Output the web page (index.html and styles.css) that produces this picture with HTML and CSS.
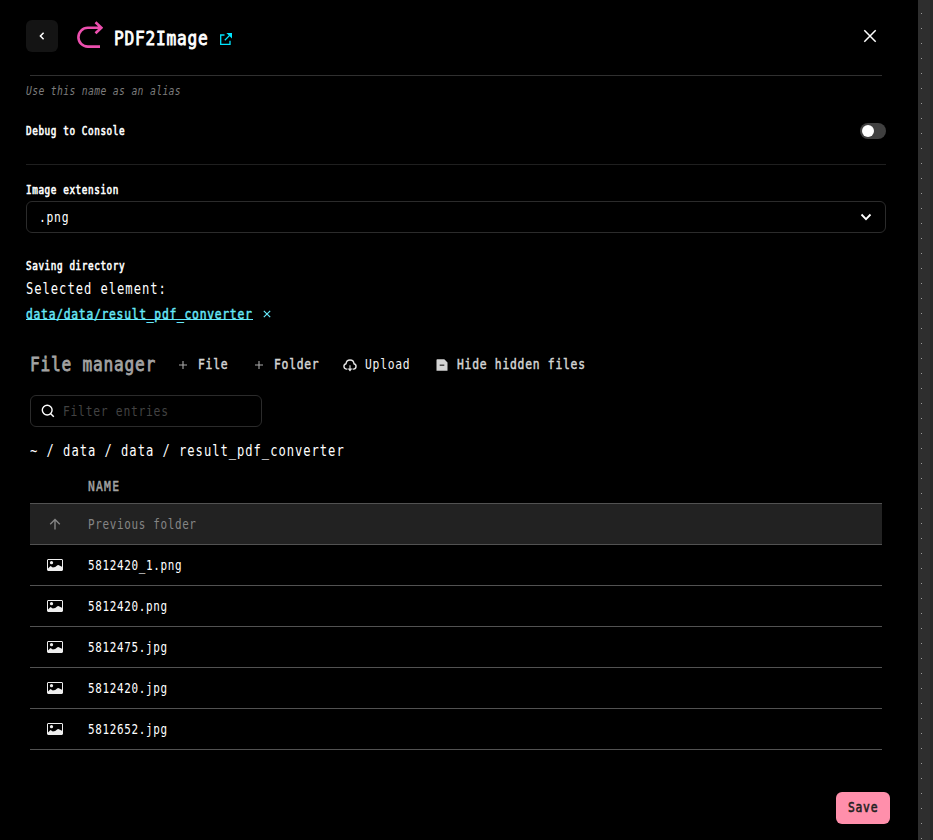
FILE: index.html
```html
<!DOCTYPE html>
<html lang="en">
<head>
<meta charset="utf-8">
<title>PDF2Image</title>
<link rel="stylesheet" href="styles.css">
</head>
<body>
<div class="app">
<main class="panel">
  <header class="header">
    <button class="back" aria-label="Back"><svg width="6" height="8" viewBox="0 0 6 8"><path d="M4.6.7 1.4 4l3.2 3.3" fill="none" stroke="#fff" stroke-width="1.5"/></svg></button>
    <svg class="logo" width="26" height="27" viewBox="0 0 26 27"><path d="M23.5 6.8H10.8a9.4 9.4 0 0 0 0 18.8H23M18.5 1.3l5.8 5.5-5.8 5.5" fill="none" stroke="#ec4fae" stroke-width="2.6"/></svg>
    <h1 class="title"><span class="t">PDF2Image</span></h1>
    <svg class="external" width="14" height="14" viewBox="0 0 14 14"><path d="M5.5 3H1.7v9.3H11V8.7M5.8 8.2l5.8-5.8" fill="none" stroke="#00e5ff" stroke-width="1.3"/><path d="M7.4 1H13v5.6z" fill="#00e5ff"/></svg>
    <svg class="close" width="14" height="14" viewBox="0 0 14 14"><path d="m1.3 1.3 11.4 11.4m0-11.4L1.3 12.7" stroke="#fff" stroke-width="1.5"/></svg>
  </header>
  <p class="hint"><span class="t">Use this name as an alias</span></p>
  <div class="setting"><span class="label"><span class="t">Debug to Console</span></span><span class="toggle"></span></div>
  <label class="label ext-label"><span class="t">Image extension</span></label>
  <div class="select"><span class="body"><span class="t">.png</span></span><svg width="12" height="8" viewBox="0 0 12 8"><path d="m1.5 1.5 4.5 4.6 4.5-4.6" fill="none" stroke="#fff" stroke-width="1.8"/></svg></div>
  <label class="label dir-label"><span class="t">Saving directory</span></label>
  <div class="large selected"><span class="t">Selected element:</span></div>
  <div class="path"><a class="body bold"><span class="t">data/data/result_pdf_converter</span></a><svg width="8" height="8" viewBox="0 0 8 8"><path d="m.8.8 6.4 6.4m0-6.4L.8 7.2" stroke="#67e8f9" stroke-width="1.2"/></svg></div>

  <section class="manager">
    <div class="toolbar">
      <h2><span class="t">File manager</span></h2>
      <button class="tool file"><svg width="8" height="8" viewBox="0 0 8 8"><path d="M4 0v8M0 4h8" stroke="#a9a9a9" stroke-width="1.1"/></svg><span class="t">File</span></button>
      <button class="tool folder"><svg width="8" height="8" viewBox="0 0 8 8"><path d="M4 0v8M0 4h8" stroke="#a9a9a9" stroke-width="1.1"/></svg><span class="t">Folder</span></button>
      <button class="tool upload"><svg width="14" height="13" viewBox="0 0 14 13"><path d="M4.4 10.1H3.3a2.7 2.7 0 0 1-.3-5.3C3.3 2.5 4.8 1 7 1s3.8 1.5 4 3.8a2.7 2.7 0 0 1-.4 5.3h-1" fill="none" stroke="#e5e5e5" stroke-width="1.4"/><path d="M7 6.2v4" stroke="#aaa" stroke-width="1.5"/><path d="M4.6 9.5h4.8L7 12.5z" fill="#e5e5e5"/></svg><span class="t">Upload</span></button>
      <button class="tool hide"><svg width="12" height="12" viewBox="0 0 12 12"><path d="M1.2.2h7.1l3.2 3.2v8.4H.5V1q0-.8.7-.8z" fill="#d4d4d4"/><path d="M3.7 6.2h4.6" stroke="#333" stroke-width="1.3"/></svg><span class="t">Hide hidden files</span></button>
    </div>
    <div class="search"><svg width="14" height="14" viewBox="0 0 14 14"><circle cx="6.2" cy="6.1" r="4.9" fill="none" stroke="#fff" stroke-width="1.4"/><path d="m9.7 9.7 3.1 3" stroke="#fff" stroke-width="1.5"/></svg><span class="body"><span class="t">Filter entries</span></span></div>
    <div class="large crumbs"><span class="t">~ / data / data / result_pdf_converter</span></div>
    <div class="thead"><span class="t">NAME</span></div>
    <div class="row previous"><span class="icon"><svg width="12" height="12" viewBox="0 0 12 12"><path d="M6 11.5V1.5M1.2 6.2 6 1.4l4.8 4.8" fill="none" stroke="#858585" stroke-width="1.4"/></svg></span><span class="t">Previous folder</span></div>
    <div class="row"><span class="icon"><svg width="16" height="12"><use href="#image"/></svg></span><span class="t">5812420_1.png</span></div>
    <div class="row"><span class="icon"><svg width="16" height="12"><use href="#image"/></svg></span><span class="t">5812420.png</span></div>
    <div class="row"><span class="icon"><svg width="16" height="12"><use href="#image"/></svg></span><span class="t">5812475.jpg</span></div>
    <div class="row"><span class="icon"><svg width="16" height="12"><use href="#image"/></svg></span><span class="t">5812420.jpg</span></div>
    <div class="row"><span class="icon"><svg width="16" height="12"><use href="#image"/></svg></span><span class="t">5812652.jpg</span></div>
  </section>
  <footer><button class="save"><span class="t">Save</span></button></footer>
</main>
<aside class="canvas"></aside>
</div>
<svg class="defs" width="0" height="0"><symbol id="image" viewBox="0 0 16 12"><rect x=".5" y=".5" width="15" height="11" rx=".5" fill="none" stroke="#eee"/><circle cx="4.5" cy="3.7" r="1.6" fill="#eee"/><path d="M1 9.4 3.5 7l2.3 1.6L8.2 8l2.2-1.7q1-.6 2 .1L15 7.7V12H1z" fill="#eee"/></symbol></svg>
</body>
</html>
```
FILE: styles.css
```css
* { box-sizing: border-box; }
body { margin: 0; background: #000; color: #fff; font-family: "DejaVu Sans Mono", "Liberation Mono", monospace; overflow: hidden; }
h1, h2, p { margin: 0; font-weight: 400; }
button { border: 0; padding: 0; background: none; color: inherit; font: inherit; }
svg { display: block; flex: none; }
.app { display: flex; height: 840px; }
.panel { width: 918px; height: 840px; padding: 0 32px 0 26px; }
.canvas { width: 15px; background: radial-gradient(circle, #999 0 .7px, transparent .8px) -4px 6px / 15px 15px, linear-gradient(90deg, #2e2e2e 12px, #292929 12px); }

/* Narrow glyphs set on a fixed character pitch */
.t { display: inline-block; width: 0; white-space: pre; line-height: 20px; transform: scaleX(.81); transform-origin: left; letter-spacing: calc(var(--pitch) / .81 - .602em); }

.header { display: flex; align-items: flex-start; height: 76px; position: relative; }
.header::after { content: ""; position: absolute; left: 4px; right: 4px; bottom: 0; height: 1px; background: #303030; }
.back { width: 32px; height: 32px; margin-top: 20px; border-radius: 6px; background: #141414; display: flex; align-items: center; justify-content: center; }
.logo { margin: 21px 0 0 19px; }
.title { --pitch: 10.5px; width: 95px; margin: 28px 0 0 11px; font-size: 20px; -webkit-text-stroke: .9px; line-height: 20px; }
.external { margin: 32px 0 0 10px; }
.close { margin: 29px 9px 0 auto; }
.hint { --pitch: 6.2px; height: 30px; font-size: 12px; line-height: 30px; font-style: italic; color: #7c7c7c; }
.setting { display: flex; align-items: center; justify-content: space-between; height: 59px; padding-bottom: 8px; border-bottom: 1px solid #1f1f1f; }
.label { --pitch: 6.2px; display: block; height: 20px; font-size: 11.5px; line-height: 20px; -webkit-text-stroke: .6px; }
.toggle { width: 26px; height: 16px; padding: 2px; border-radius: 8px; background: #404040; }
.toggle::before { content: ""; display: block; width: 12px; height: 12px; border-radius: 50%; background: #fff; }
.ext-label { margin-top: 15px; }
.body { --pitch: 7.55px; font-size: 14px; line-height: 20px; }
.bold { -webkit-text-stroke: .5px; }
.select { display: flex; align-items: center; justify-content: space-between; height: 32px; margin-top: 1px; padding: 0 13px 0 12px; border: 1px solid #2b2b2b; border-radius: 6px; }
.dir-label { margin-top: 23px; }
.large { --pitch: 8.28px; font-size: 15px; line-height: 20px; }
.selected { height: 20px; margin-top: 3px; }
.path { display: flex; align-items: center; height: 20px; margin-top: 5px; color: #67e8f9; }
.path a { width: 227px; height: 12px; line-height: 12px; border-bottom: 1px solid #67e8f9; margin-right: 10px; }
.path .t { line-height: 12px; margin-top: -1px; }

.manager { padding: 0 4px; }
.toolbar { display: flex; align-items: center; height: 32px; margin-top: 25px; color: #d4d4d4; }
h2 { --pitch: 10.5px; width: 149px; height: 22px; font-size: 20px; line-height: 20px; color: #a3a3a3; -webkit-text-stroke: .8px; }
.tool { --pitch: 7.57px; display: flex; align-items: center; height: 20px; font-size: 14px; -webkit-text-stroke: .5px; }
.tool .t { margin-top: -2px; }
.file { width: 76px; gap: 11px; }
.folder { width: 88px; gap: 11px; }
.upload { width: 93px; gap: 8px; color: #f2f2f2; -webkit-text-stroke: 0; }
.hide { gap: 9px; }
.search { display: flex; align-items: center; gap: 8px; width: 232px; height: 32px; margin-top: 14px; padding-left: 10px; border: 1px solid #2b2b2b; border-radius: 6px; color: #424242; }
.crumbs { height: 20px; margin-top: 14px; }
.thead { --pitch: 8.05px; height: 43px; padding-left: 58px; font-size: 14px; line-height: 50px; color: #a3a3a3; -webkit-text-stroke: .5px; border-bottom: 1px solid #525252; }
.row { --pitch: 7.24px; display: flex; align-items: center; height: 41px; font-size: 13.5px; border-bottom: 1px solid #525252; }
.row .t { margin-top: -1px; }
.icon { width: 58px; padding-left: 17px; }
.previous { background: #222; color: #858585; }
.previous .icon { padding-left: 19px; }
footer { display: flex; justify-content: flex-end; margin: 42px -4px 0 0; }
.save { --pitch: 7.55px; width: 54px; height: 32px; padding: 0 0 2px 12px; border-radius: 6px; background: #ff8fab; color: #222; font-size: 14px; text-align: left; -webkit-text-stroke: .6px; }
.defs { position: absolute; }
```
